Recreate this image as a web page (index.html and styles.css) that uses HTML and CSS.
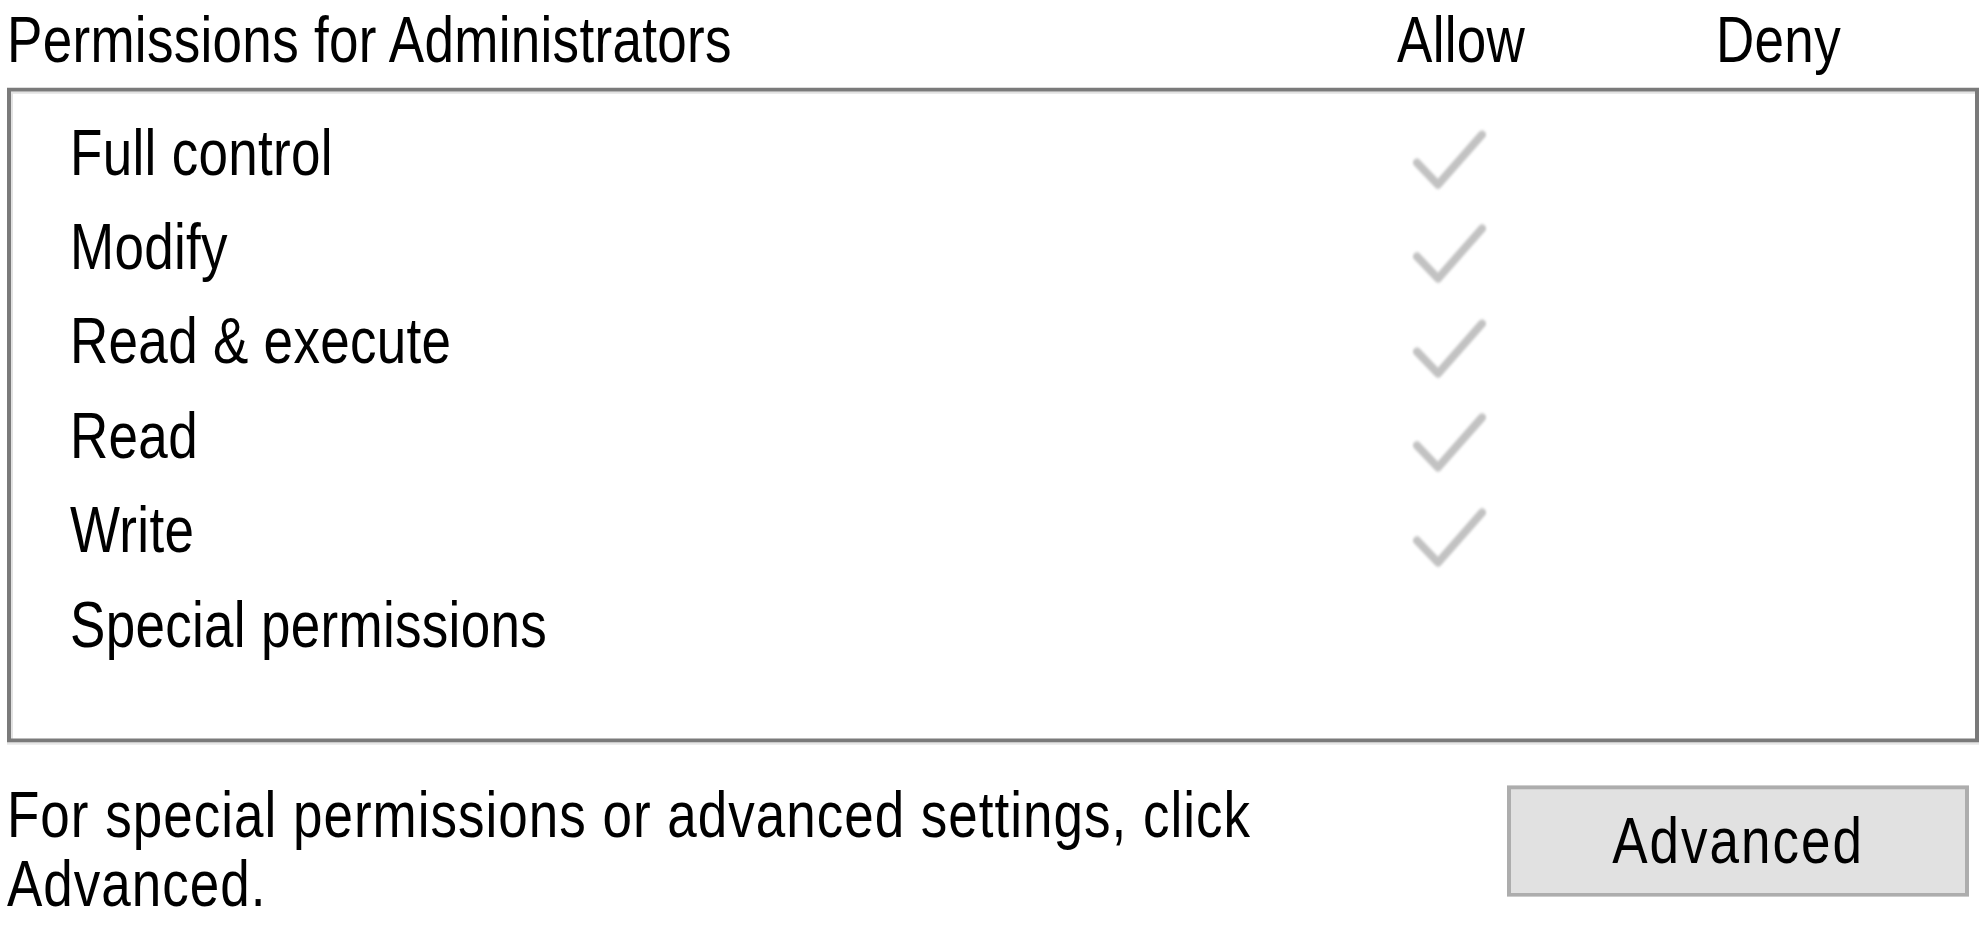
FILE: index.html
```html
<!DOCTYPE html>
<html lang="en">
<head>
<meta charset="utf-8">
<title>Permissions for Administrators</title>
<link rel="stylesheet" href="styles.css">
</head>
<body>
<div class="dialog">
  <div class="header">
    <span class="title">Permissions for Administrators</span>
    <span class="col">Allow</span>
    <span class="col">Deny</span>
  </div>
  <div class="perm-box">
    <div class="row">
      <span class="label">Full control</span>
      <span class="check"><svg viewBox="0 0 74 62" preserveAspectRatio="none"><polyline points="4,33 25,55 69,5"/></svg></span>
    </div>
    <div class="row">
      <span class="label">Modify</span>
      <span class="check"><svg viewBox="0 0 74 62" preserveAspectRatio="none"><polyline points="4,33 25,55 69,5"/></svg></span>
    </div>
    <div class="row">
      <span class="label">Read &amp; execute</span>
      <span class="check"><svg viewBox="0 0 74 62" preserveAspectRatio="none"><polyline points="4,33 25,55 69,5"/></svg></span>
    </div>
    <div class="row">
      <span class="label">Read</span>
      <span class="check"><svg viewBox="0 0 74 62" preserveAspectRatio="none"><polyline points="4,33 25,55 69,5"/></svg></span>
    </div>
    <div class="row">
      <span class="label">Write</span>
      <span class="check"><svg viewBox="0 0 74 62" preserveAspectRatio="none"><polyline points="4,33 25,55 69,5"/></svg></span>
    </div>
    <div class="row">
      <span class="label">Special permissions</span>
      <span class="check"></span>
    </div>
  </div>
  <div class="footer">
    <p class="hint">For special permissions or advanced settings, click Advanced.</p>
    <button class="btn" type="button">Advanced</button>
  </div>
</div>
</body>
</html>
```

FILE: styles.css
```css
html, body {
  margin: 0;
  padding: 0;
  background: #ffffff;
}

body {
  min-height: 936px;
  font-family: "Liberation Sans", Arial, sans-serif;
  font-size: 53px;
  color: #000000;
  overflow: hidden;
}

.dialog {
  padding: 0 9px 0 7px;
  transform: scaleY(1.235);
  transform-origin: 0 0;
}

.header {
  display: grid;
  grid-template-columns: 1390px 319px auto;
  height: 64px;
  line-height: 64px;
  margin-bottom: 7.3px;
  white-space: nowrap;
  letter-spacing: 0.3px;
}

.perm-box {
  border-style: solid;
  border-color: #7a7a7a;
  border-width: 3.24px 4px;
  box-shadow: inset 2px 2px 0 #e2e2e2, 0 2px 0 #e6e6e6;
  padding: 11.4px 0 54.1px 59px;
}

.row {
  display: grid;
  grid-template-columns: 1343px 74px;
  height: 76.4px;
  line-height: 76.4px;
  white-space: nowrap;
  letter-spacing: 0.3px;
}

.check {
  align-self: start;
  margin-top: 19.4px;
  height: 50.2px;
}

.check svg {
  display: block;
  width: 74px;
  height: 50.2px;
  overflow: visible;
  filter: blur(1.1px);
}

.check polyline {
  fill: none;
  stroke: #c2c2c2;
  stroke-width: 8;
  stroke-linecap: round;
  stroke-linejoin: round;
}

.footer {
  display: flex;
  justify-content: space-between;
  align-items: flex-start;
  margin-top: 30.6px;
}

.hint {
  margin: 0;
  max-width: 1420px;
  line-height: 55.9px;
  letter-spacing: 1px;
}

.btn {
  box-sizing: border-box;
  width: 462px;
  height: 89.9px;
  margin: 4.2px 10px 0 0;
  padding: 0;
  background: #e1e1e1;
  border-style: solid;
  border-color: #adadad;
  border-width: 3.24px 4px;
  border-radius: 0;
  font-family: "Liberation Sans", Arial, sans-serif;
  font-size: 53px;
  letter-spacing: 2px;
  color: #000000;
  display: flex;
  align-items: center;
  justify-content: center;
  line-height: normal;
}
```
